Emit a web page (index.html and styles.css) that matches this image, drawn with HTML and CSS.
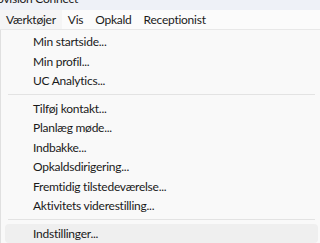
FILE: index.html
```html
<!DOCTYPE html>
<html>
<head>
<meta charset="utf-8">
<link rel="stylesheet" href="styles.css">
</head>
<body>
<div class="titlebar"><span class="title">ovision Connect</span></div>
<div class="menubar">
  <span class="mitem active">Værktøjer</span>
  <span class="mitem">Vis</span>
  <span class="mitem">Opkald</span>
  <span class="mitem">Receptionist</span>
</div>
<div class="dropdown">
  <div class="item">Min startside...</div>
  <div class="item">Min profil...</div>
  <div class="item">UC Analytics...</div>
  <div class="sep"></div>
  <div class="item">Tilføj kontakt...</div>
  <div class="item">Planlæg møde...</div>
  <div class="item">Indbakke...</div>
  <div class="item">Opkaldsdirigering...</div>
  <div class="item">Fremtidig tilstedeværelse...</div>
  <div class="item">Aktivitets viderestilling...</div>
  <div class="sep"></div>
  <div class="item hover">Indstillinger...</div>
</div>
</body>
</html>
```
FILE: styles.css
```css
html, body {
  margin: 0;
  padding: 0;
  height: 243px;
  overflow: hidden;
  background: #f3f3f3;
  font-family: Lato, "Noto Sans", sans-serif;
  font-size: 12px;
  letter-spacing: -0.25px;
  color: #1a1a1a;
}
.titlebar {
  height: 10px;
  background: #eef1f7;
  overflow: hidden;
  position: relative;
}
.title {
  position: absolute;
  left: -3px;
  top: -9px;
  line-height: 16px;
}
.menubar {
  height: 19px;
  background: #fbfbfb;
  display: flex;
  align-items: center;
  border-bottom: 1px solid #e8e8e8;
  white-space: nowrap;
  overflow: hidden;
}
.mitem {
  padding: 0 6px;
  line-height: 19px;
}
.mitem.active {
  background: #f5f5f5;
}
.dropdown {
  background: #f9f9f9;
  padding: 2px 2px 3px 4px;
  border-left: 1px solid #e0e0e0;
  height: 213px;
  white-space: nowrap;
}
.item {
  height: 19.5px;
  line-height: 19.5px;
  padding-left: 28px;
  border-radius: 4px;
}
.item.hover {
  background: #efefef;
}
.sep {
  height: 1px;
  background: #e3e3e3;
  margin: 3px 3px 4px 3px;
}
```
